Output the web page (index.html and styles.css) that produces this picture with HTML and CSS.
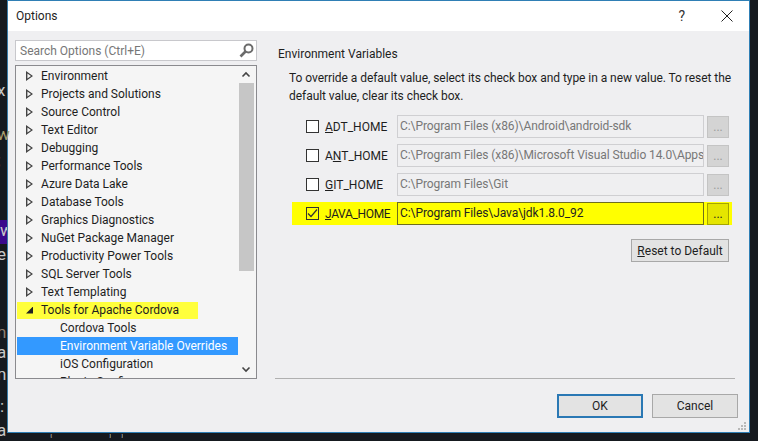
FILE: index.html
```html
<!DOCTYPE html>
<html lang="en">
<head>
<meta charset="utf-8">
<title>Options</title>
<link rel="stylesheet" href="styles.css">
</head>
<body>
<div class="desktop">
  <span class="frag f1">x</span><span class="frag f2">w</span><span class="frag f3">;</span><span class="frag f4">w</span><span class="frag f5">e</span><span class="frag f6">n</span><span class="frag f7">a</span><span class="frag f8">n</span><span class="frag f9">:</span><span class="frag f10">a</span><span class="frag f11">(</span><span class="frag f12">)</span><span class="frag f13">)</span>
  <div class="dialog">
    <header class="titlebar">
      <span class="title">Options</span>
      <span class="help">?</span>
      <svg class="close" width="14" height="14" viewBox="0 0 14 14"><path d="M1.5 1.5l11 11M12.5 1.5l-11 11" stroke="#222" stroke-width="1" fill="none"/></svg>
    </header>
    <div class="content">
      <aside class="left">
        <div class="search">
          <span class="search-text">Search Options (Ctrl+E)</span>
          <svg width="15" height="15" viewBox="0 0 15 15"><circle cx="9.5" cy="5.5" r="4" fill="none" stroke="#6b6b6b" stroke-width="2"/><path d="M6.5 8.5L1.5 13.5" stroke="#6b6b6b" stroke-width="2.6"/></svg>
        </div>
        <div class="tree">
          <div class="tree-list">
            <div class="row"><i class="tri"></i>Environment</div>
            <div class="row"><i class="tri"></i>Projects and Solutions</div>
            <div class="row"><i class="tri"></i>Source Control</div>
            <div class="row"><i class="tri"></i>Text Editor</div>
            <div class="row"><i class="tri"></i>Debugging</div>
            <div class="row"><i class="tri"></i>Performance Tools</div>
            <div class="row"><i class="tri"></i>Azure Data Lake</div>
            <div class="row"><i class="tri"></i>Database Tools</div>
            <div class="row"><i class="tri"></i>Graphics Diagnostics</div>
            <div class="row"><i class="tri"></i>NuGet Package Manager</div>
            <div class="row"><i class="tri"></i>Productivity Power Tools</div>
            <div class="row"><i class="tri"></i>SQL Server Tools</div>
            <div class="row"><i class="tri"></i>Text Templating</div>
            <div class="row"><span class="mark"><i class="tri-open"></i>Tools for Apache Cordova</span></div>
            <div class="row child">Cordova Tools</div>
            <div class="row child selected">Environment Variable Overrides</div>
            <div class="row child">iOS Configuration</div>
            <div class="row child">Plugin Config</div>
          </div>
          <div class="scrollbar">
            <svg width="16" height="16" viewBox="0 0 16 16"><path d="M4.5 9.5L8 6l3.5 3.5" fill="none" stroke="#444" stroke-width="1.6"/></svg>
            <div class="thumb"></div>
            <svg width="16" height="16" viewBox="0 0 16 16"><path d="M4.5 6.5L8 10l3.5-3.5" fill="none" stroke="#444" stroke-width="1.6"/></svg>
          </div>
        </div>
      </aside>
      <main class="right">
        <h1 class="heading">Environment Variables</h1>
        <p class="intro">To override a default value, select its check box and type in a new value. To reset the default value, clear its check box.</p>
        <div class="vars">
          <div class="var">
            <span class="check"></span><span class="name"><u>A</u>DT_HOME</span>
            <span class="field">C:\Program Files (x86)\Android\android-sdk</span><span class="dots">...</span>
          </div>
          <div class="var">
            <span class="check"></span><span class="name">A<u>N</u>T_HOME</span>
            <span class="field">C:\Program Files (x86)\Microsoft Visual Studio 14.0\Apps\</span><span class="dots">...</span>
          </div>
          <div class="var">
            <span class="check"></span><span class="name"><u>G</u>IT_HOME</span>
            <span class="field">C:\Program Files\Git</span><span class="dots">...</span>
          </div>
          <div class="var on">
            <span class="check"><svg width="11" height="11" viewBox="0 0 11 11"><path d="M1 5.5l3 3 6-7" fill="none" stroke="#333" stroke-width="1.2"/></svg></span><span class="name tight"><u>J</u>AVA_HOME</span>
            <span class="field">C:\Program Files\Java\jdk1.8.0_92</span><span class="dots">...</span>
          </div>
        </div>
        <div class="reset-wrap"><span class="btn reset"><u>R</u>eset to Default</span></div>
      </main>
    </div>
    <footer class="footer">
      <div class="rule"></div>
      <div class="actions">
        <span class="btn act ok">OK</span>
        <span class="btn act">Cancel</span>
      </div>
      <svg class="grip" width="10" height="10" viewBox="0 0 10 10"><path d="M7 1h2v2H7zM4 4h2v2H4zM7 4h2v2H7zM1 7h2v2H1zM4 7h2v2H4zM7 7h2v2H7z" fill="#b8b8b8"/></svg>
    </footer>
  </div>
</div>
</body>
</html>
```
FILE: styles.css
```css
* { box-sizing: border-box; }
html, body { margin: 0; padding: 0; }
body { width: 758px; height: 441px; overflow: hidden; }
.desktop {
  position: relative;
  width: 758px; height: 441px;
  background: #161a1f;
  padding: 0 8px 8px 7px;
  font: 12px/16px Roboto, sans-serif;
  color: #1e1e1e;
  overflow: hidden;
}
.frag { position: absolute; left: -3px; font-size: 17px; line-height: 20px; color: #c8c8c8; }
.f1 { top: 80px; }
.f2 { top: 124px; color: #a8a070; }
.f3 { top: 150px; }
.f4 { top: 220px; left: 0; width: 7px; background: #3a0a8c; overflow: hidden; height: 24px; }
.f5 { top: 244px; }
.f6 { top: 322px; color: #8f7f6f; }
.f7 { top: 342px; }
.f8 { top: 364px; }
.f9 { top: 396px; left: 0; }
.f10 { top: 420px; }
.f11, .f12, .f13 { top: 434px; height: 4px; line-height: 4px; font-size: 10px; overflow: hidden; color: #999; }
.f11 { left: 50px; }
.f12 { left: 108px; }
.f13 { left: 120px; }
.dialog {
  width: 743px; height: 433px;
  background: #efeff1;
  border: 1px solid #2f7fb5;
  border-left-color: #3a7ca8;
  display: flex; flex-direction: column;
}
.titlebar {
  height: 30px; background: #fff; flex: none;
  display: flex; align-items: center;
  padding: 0 15px 0 8px;
}
.title { flex: 1; font-size: 12px; }
.help { font-size: 14px; margin-right: 35px; color: #333; }
.content { flex: 1; display: flex; padding-top: 9px; min-height: 0; }
.left { width: 242px; margin-left: 7px; flex: none; display: flex; flex-direction: column; gap: 4px; align-self: flex-start; }
.search {
  height: 21px; flex: none; background: #fff; border: 1px solid #c8c8cc;
  display: flex; align-items: center; justify-content: space-between;
  padding: 0 2px 0 4px; color: #777;
}
.tree {
  height: 314px; flex: none; display: flex;
  background: #f5f5f5; border: 1px solid #8a8a8e; overflow: hidden;
}
.tree-list { flex: 1; padding: 1px 0 0 1px; min-width: 0; }
.row { height: 18px; line-height: 18px; padding-left: 9px; display: flex; align-items: center; white-space: nowrap; }
.mark { background: #ffff3c; display: flex; align-items: center; height: 17px; margin-left: -9px; padding-left: 9px; width: 181px; }
.tri {
  width: 7px; height: 10px; flex: none; margin-right: 8px;
  background: #444;
  clip-path: polygon(0 0, 100% 50%, 0 100%, 0 0, 1.4px 2.6px, 1.4px 7.4px, 5px 5px, 1.4px 2.6px);
}
.tri-open {
  width: 7px; height: 7px; flex: none; margin: 0 8px 0 0;
  background: #222;
  clip-path: polygon(100% 0, 100% 100%, 0 100%);
}
.child { padding-left: 43px; }
.selected { background: #3399ff; color: #fff; }
.scrollbar { width: 18px; flex: none; padding: 1px 2px 0 0; display: flex; flex-direction: column; align-items: center; background: #f5f5f5; }
.thumb { width: 15px; height: 188px; background: #c6c6c6; margin-bottom: 90px; flex: none; }
.scrollbar svg { flex: none; }
.right { flex: 1; padding-left: 21px; min-width: 0; }
.heading { margin: 6px 0 0; font: inherit; height: 16px; }
.intro { margin: 7px 0 0 11px; width: 452px; line-height: 18px; letter-spacing: -0.05px; }
.vars { margin: 10px 0 0 14px; width: 440px; }
.var {
  height: 23px; margin-bottom: 6px; display: flex; align-items: center; padding-left: 14px;
}
.check { width: 13px; height: 13px; border: 1px solid #333; background: #fff; flex: none; display: flex; align-items: center; justify-content: center; margin-right: 6px; }
.name { width: 72px; flex: none; }
.tight { letter-spacing: -0.35px; }
.field {
  width: 307px; height: 23px; flex: none; margin-right: 3px; padding: 0 2px;
  border: 1px solid #cfcfd2; background: #efeff1; color: #777; line-height: 21px;
  white-space: nowrap; overflow: hidden; letter-spacing: -0.08px;
}
.dots {
  width: 22px; height: 22px; flex: none; background: #d4d4d4; border: 1px solid #c4c4c4;
  color: #9a9a9a; text-align: center; line-height: 20px;
}
.var.on { background: #ffff00; }
.var.on .check { background: #ffff00; }
.var.on .field { background: #ffff00; border-color: #6e6e1e; color: #222; }
.var.on .dots { background: #e5e500; border-color: #a5a500; color: #222; }
.reset-wrap { display: flex; justify-content: flex-end; margin: 14px 20px 0 0; }
.btn { display: flex; align-items: center; justify-content: center; background: #e3e3e3; border: 1px solid #a8a8a8; }
.reset { width: 98px; height: 23px; }
.footer { position: relative; height: 54px; flex: none; }
.rule { height: 1px; background: #b0b0b0; margin: 0 14px 0 267px; }
.actions { display: flex; justify-content: flex-end; gap: 9px; margin: 15px 11px 0 0; }
.act { width: 86px; height: 24px; }
.ok { border: 2px solid #2a78b4; }
.grip { position: absolute; right: 2px; bottom: 1px; }
```
